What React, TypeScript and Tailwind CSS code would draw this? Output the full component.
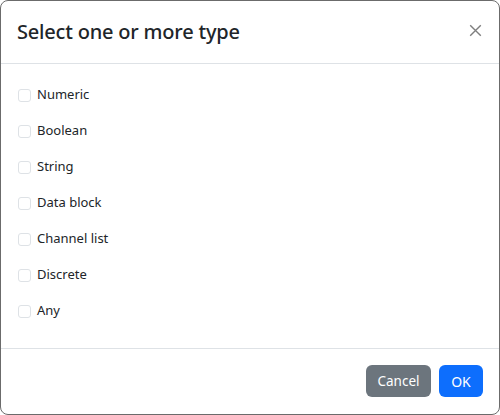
import { useState } from 'react';

const types = ['Numeric', 'Boolean', 'String', 'Data block', 'Channel list', 'Discrete', 'Any'];

export default function App() {
  const [checked, setChecked] = useState<Record<string, boolean>>({});

  return (
    <div className="w-[500px] h-[415px] bg-white" style={{ fontFamily: '"Noto Sans", "Open Sans", sans-serif' }}>
      <div className="w-[500px] h-[415px] flex flex-col border border-[#6b6b6b] rounded-[8px] text-[#212529]">
        {/* header */}
        <div className="h-[63px] shrink-0 flex items-center justify-between pl-[16px] pr-[16px] border-b border-[#dee2e6]">
          <h5 className="text-[20px] font-medium leading-[30px] tracking-[-0.2px]">Select one or more type</h5>
          <button className="w-[20px] h-[20px] flex items-center justify-center mr-[-2px] mb-[3px] opacity-50">
            <svg width="13" height="13" viewBox="0 0 16 16">
              <path d="M1.5 1.5 L14.5 14.5 M14.5 1.5 L1.5 14.5" stroke="#000" strokeWidth="1.7" />
            </svg>
          </button>
        </div>

        {/* body */}
        <div className="flex-1 pt-[13px] pb-[19px] px-[17px]">
          {types.map((t) => (
            <label key={t} className="h-[36px] flex items-center gap-[6px] text-[13px]">
              <input
                type="checkbox"
                checked={!!checked[t]}
                onChange={() => setChecked((c) => ({ ...c, [t]: !c[t] }))}
                className="appearance-none w-[13px] h-[13px] rounded-[3px] border border-[#dee2e6] bg-white checked:bg-[#0d6efd] checked:border-[#0d6efd]"
              />
              <span>{t}</span>
            </label>
          ))}
        </div>

        {/* footer */}
        <div className="h-[66px] shrink-0 border-t border-[#dee2e6] flex items-start justify-end gap-[8px] pt-[16px] pr-[16px]">
          <button className="w-[65px] h-[32px] rounded-[6px] bg-[#6c757d] text-white text-[13.5px]">Cancel</button>
          <button className="w-[44px] h-[32px] rounded-[6px] bg-[#0d6efd] text-white text-[14px]">OK</button>
        </div>
      </div>
    </div>
  );
}
